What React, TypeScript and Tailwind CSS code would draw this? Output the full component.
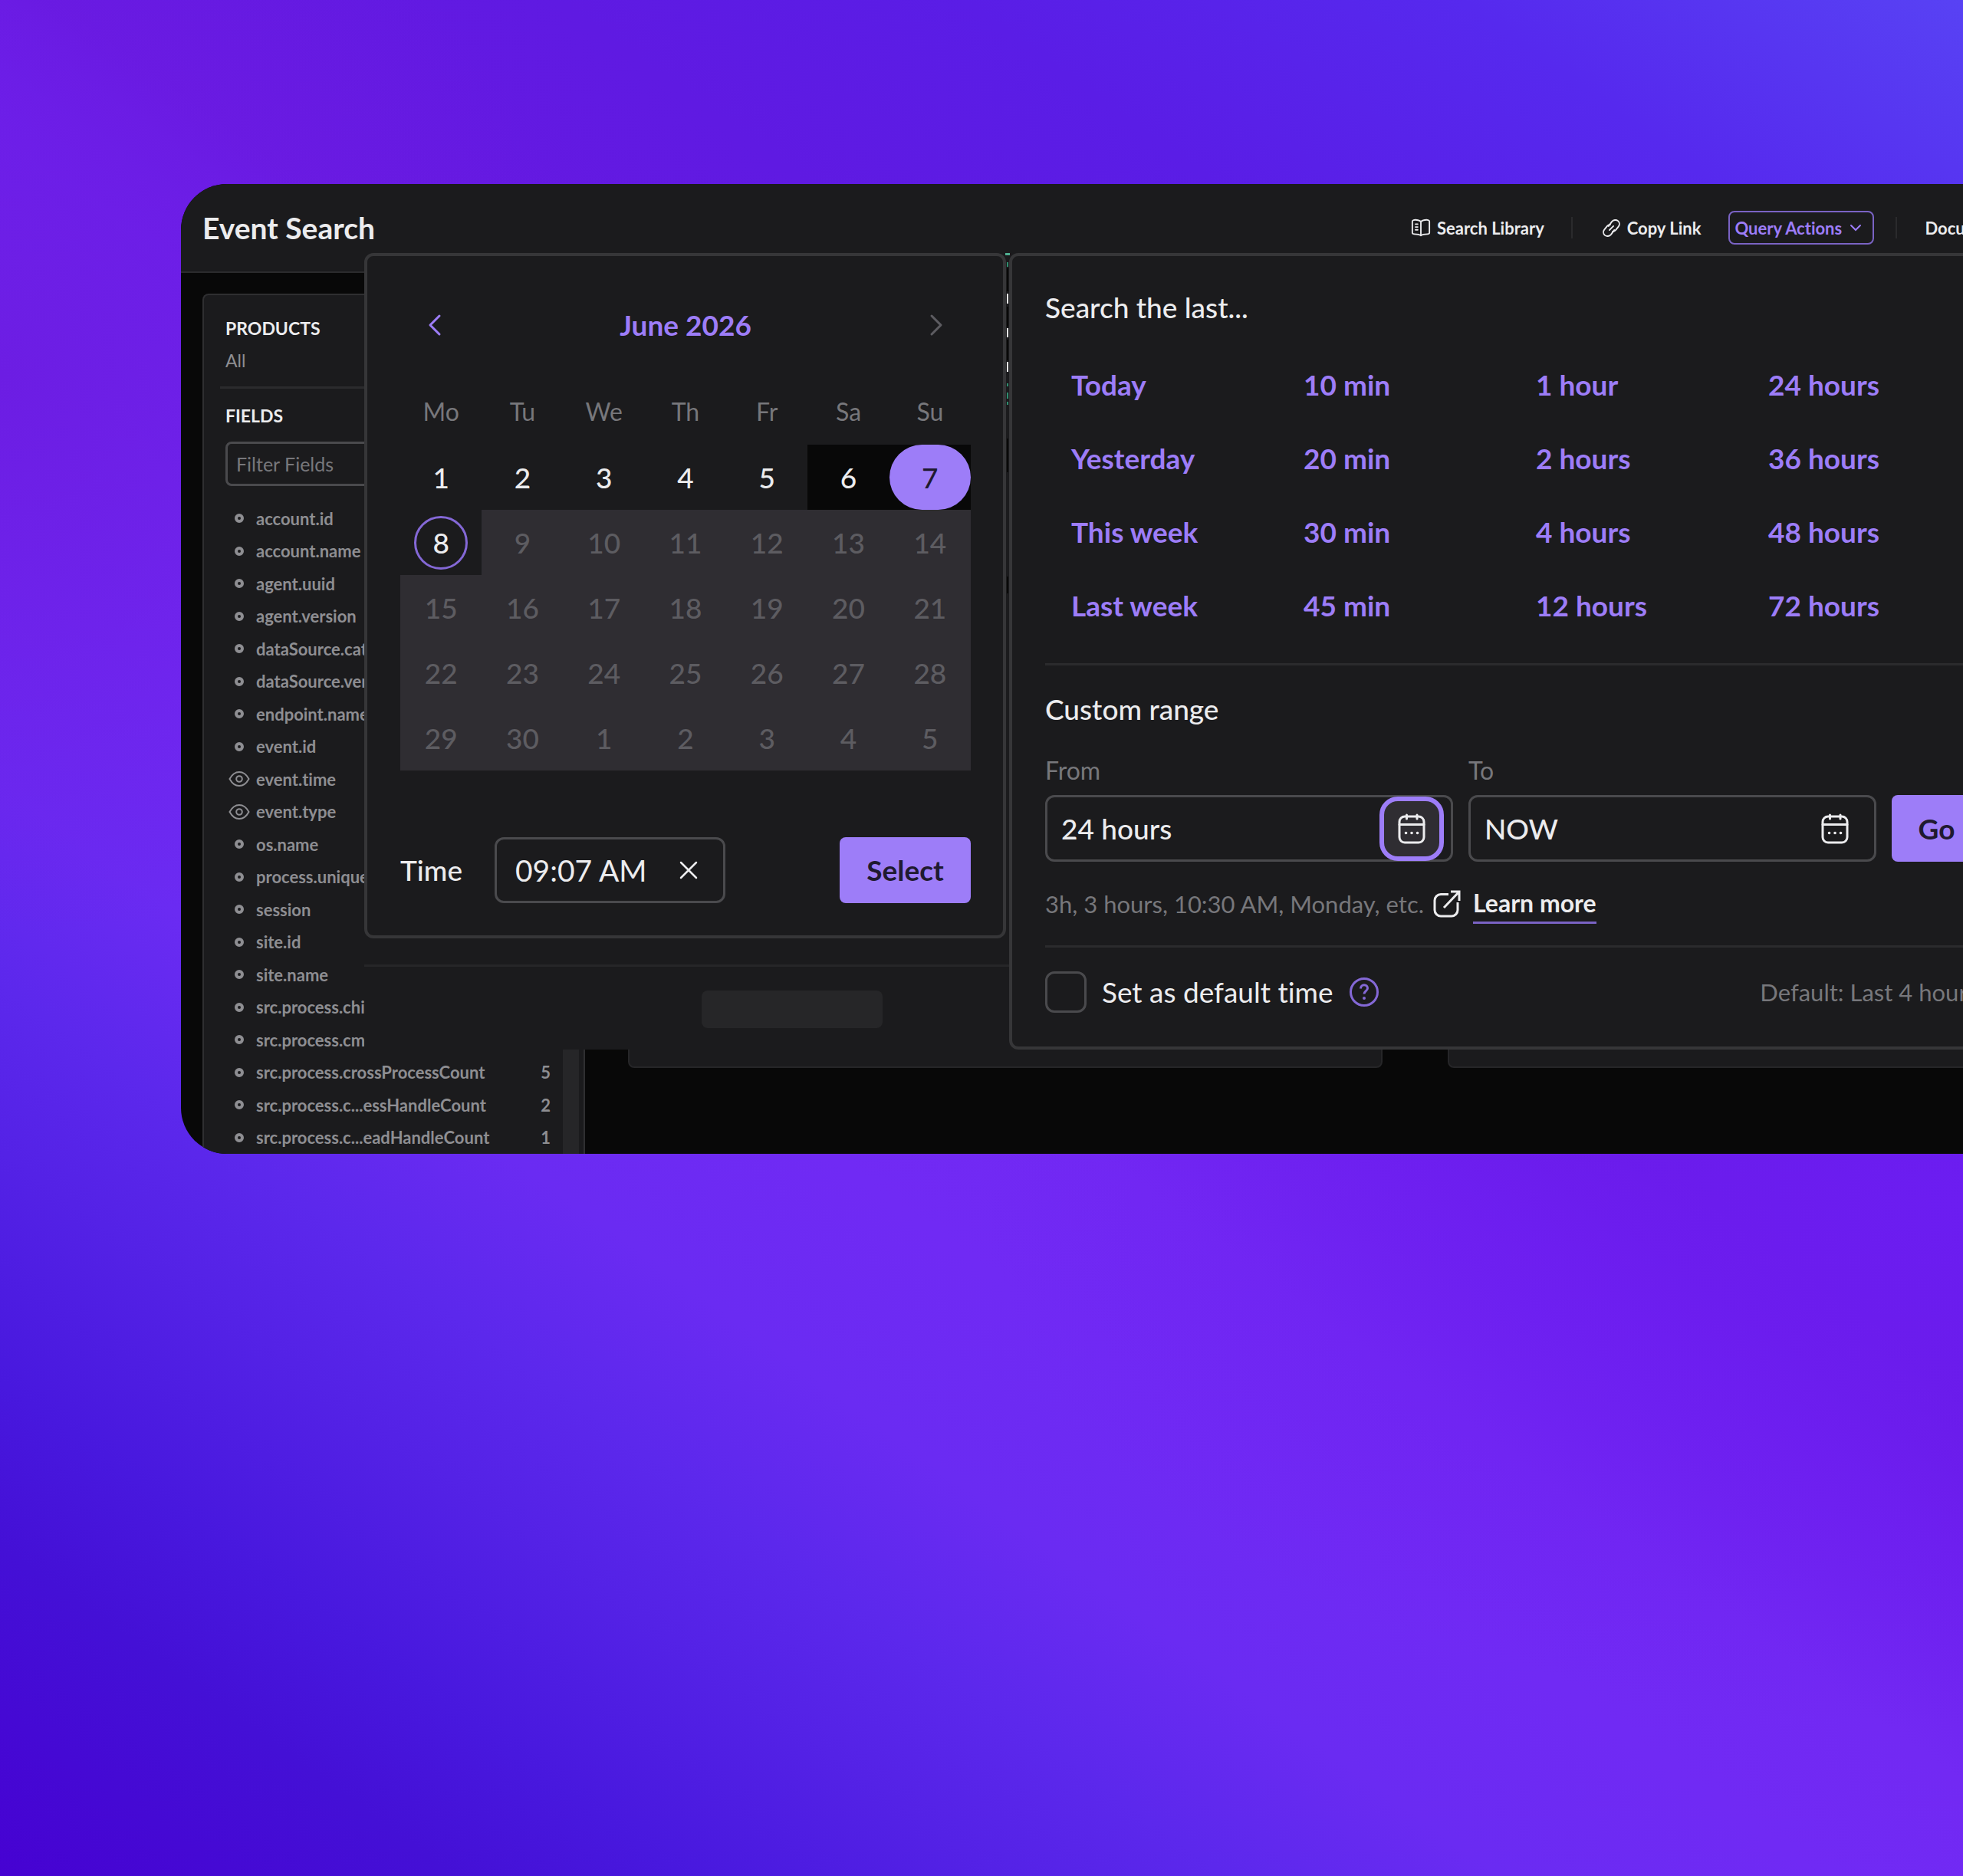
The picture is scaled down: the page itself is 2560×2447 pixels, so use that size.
import { useState } from "react";

type Field = {
  name: string;
  count: number;
  pinned?: boolean;
};

const fields: Field[] = [
  { name: "account.id", count: 1 },
  { name: "account.name", count: 1 },
  { name: "agent.uuid", count: 4 },
  { name: "agent.version", count: 2 },
  { name: "dataSource.category", count: 1 },
  { name: "dataSource.vendor", count: 1 },
  { name: "endpoint.name", count: 4 },
  { name: "event.id", count: 9 },
  { name: "event.time", count: 9, pinned: true },
  { name: "event.type", count: 9, pinned: true },
  { name: "os.name", count: 2 },
  { name: "process.unique.key", count: 9 },
  { name: "session", count: 1 },
  { name: "site.id", count: 1 },
  { name: "site.name", count: 1 },
  { name: "src.process.childProcCount", count: 9 },
  { name: "src.process.cmdline", count: 9 },
  { name: "src.process.crossProcessCount", count: 5 },
  { name: "src.process.c...essHandleCount", count: 2 },
  { name: "src.process.c...eadHandleCount", count: 1 },
];

const weekdays = ["Mo", "Tu", "We", "Th", "Fr", "Sa", "Su"];

const days = Array.from({ length: 35 }, (_, i) => (i < 30 ? i + 1 : i - 29));

const presets = [
  ["Today", "10 min", "1 hour", "24 hours"],
  ["Yesterday", "20 min", "2 hours", "36 hours"],
  ["This week", "30 min", "4 hours", "48 hours"],
  ["Last week", "45 min", "12 hours", "72 hours"],
];

const BookIcon = () => (
  <svg width="26" height="26" viewBox="0 0 28 26" fill="none" stroke="currentColor" strokeWidth="2" strokeLinejoin="round" strokeLinecap="round">
    <path d="M14 4.5C12 2.6 9 2 6 2 5.500 2 2 2.500 2 4v16c0 1.400 1.500 2 3 2 3.500 0 7 .3 9 2 2-1.700 5.500-2 9-2 1.500 0 3-.6 3-2V4c0-1.500-3.500-2-4-2-3 0-6 .6-8 2.500zM14 4.500V24" />
    <path d="M6.500 8h3M6.500 12h3M6.500 16h3" />
  </svg>
);

const LinkIcon = () => (
  <svg width="25" height="25" viewBox="0 0 24 24" fill="none" stroke="currentColor" strokeWidth="1.8" strokeLinecap="round" strokeLinejoin="round">
    <path d="M9.500 14.500l5-5" />
    <path d="M8.500 9.500l4-5.500c2-2.400 5.500-2.800 7.700-1 2.200 1.900 2.400 5 .6 7.200l-3.500 4.400c-1 1.200-2.400 1.800-3.800 1.600" />
    <path d="M15.500 14.500l-4 5.500c-2 2.400-5.500 2.800-7.700 1-2.200-1.900-2.400-5-.6-7.200l3.500-4.400c1-1.200 2.400-1.800 3.800-1.600" />
  </svg>
);

const EyeIcon = () => (
  <svg width="28" height="22" viewBox="0 0 28 22" fill="none" stroke="currentColor" strokeWidth="2">
    <path d="M1.500 11C5 4.500 9 2 14 2s9 2.500 12.500 9C23 17.500 19 20 14 20S5 17.500 1.500 11z" />
    <circle cx="14" cy="11" r="3.800" />
  </svg>
);

const DotIcon = () => (
  <svg width="28" height="22" viewBox="0 0 28 22" fill="none" stroke="currentColor" strokeWidth="4">
    <circle cx="14" cy="11" r="4" />
  </svg>
);

const CalendarIcon = () => (
  <svg width="36" height="40" viewBox="0 0 36 40" fill="none" stroke="currentColor" strokeWidth="3" strokeLinecap="round">
    <rect x="2" y="4" width="32" height="34" rx="7" />
    <path d="M2 14.500h32M11.500 2v5M25 2v5" />
    <path d="M10.500 25.500h.1M18 25.500h.1M25.500 25.500h.1" strokeWidth="3.600" />
  </svg>
);

const ExternalIcon = () => (
  <svg width="36" height="36" viewBox="0 0 36 36" fill="none" stroke="currentColor" strokeWidth="3">
    <path d="M20 5.500H10A8 8 0 0 0 2 13.500V26a8 8 0 0 0 8 8h14a8 8 0 0 0 8-8V16" />
    <path d="M14 23L34 2M23 2h11v12" />
  </svg>
);

const HelpIcon = () => (
  <svg width="40" height="40" viewBox="0 0 40 40" fill="none" stroke="currentColor" strokeWidth="3">
    <circle cx="20" cy="20" r="17.500" />
    <path d="M15.500 15.500c0-3 2-4.800 4.500-4.800s4.500 1.800 4.500 4.300c0 3.500-4.500 3.800-4.500 7.500" />
    <circle cx="20" cy="28" r="2" fill="currentColor" stroke="none" />
  </svg>
);

const CloseIcon = () => (
  <svg width="24" height="24" viewBox="0 0 24 24" fill="none" stroke="currentColor" strokeWidth="2.500" strokeLinecap="round">
    <path d="M2 2l20 20M22 2L2 22" />
  </svg>
);

const ArrowIcon = ({ flip }: { flip?: boolean }) => (
  <svg width="40" height="40" viewBox="0 0 40 40" fill="none" stroke="currentColor" strokeWidth="3" strokeLinecap="round" strokeLinejoin="round">
    <path d={flip ? "M14 8l12 12-12 12" : "M26 8L14 20l12 12"} />
  </svg>
);

const TopBar = () => {
  return (
    <header className="flex h-[116px] items-center border-b-2 border-[#2b2b2d] bg-[#1b1b1d] pl-7 font-bold text-[#ececee]">
      <h1 className="text-[39px]">Event Search</h1>
      <nav className="ml-auto flex w-[860px] items-center text-[22px]">
        <button className="flex items-center gap-2">
          <BookIcon />
          Search Library
        </button>
        <span className="ml-[35px] mr-[38px] h-7 w-[2px] bg-[#2b2b2d]" />
        <button className="flex items-center gap-2">
          <LinkIcon />
          Copy Link
        </button>
        <button className="ml-[36px] flex h-11 w-[190px] items-center justify-between rounded-lg border-2 border-[#7a63c4] px-[6px] text-[#9d7df8]">
          Query Actions
          <svg className="mr-2" width="16" height="10" viewBox="0 0 16 10" fill="none" stroke="currentColor" strokeWidth="2" strokeLinecap="round">
            <path d="M2 2l6 6 6-6" />
          </svg>
        </button>
        <span className="ml-[28px] mr-[36px] h-7 w-[2px] bg-[#2b2b2d]" />
        <a href="#docs">Documentation</a>
      </nav>
    </header>
  );
};

const Sidebar = () => {
  return (
    <aside className="w-[499px] shrink-0 rounded-t-lg border-2 border-b-0 border-[#2f2f31] bg-[#1b1b1d] pt-[22px] text-[23px]">
      <h2 className="px-7 font-bold leading-[42px] text-[#ececee]">PRODUCTS</h2>
      <p className="px-7 leading-[42px] text-[#8e8e92]">All</p>
      <hr className="mx-[21px] mt-[13px] border-t-3 border-[#2b2b2d]" />
      <h2 className="mt-[14px] px-7 font-bold leading-[42px] text-[#ececee]">FIELDS</h2>
      <div className="mt-[13px] px-7">
        <input
          aria-label="Filter Fields"
          placeholder="Filter Fields"
          className="h-[58px] w-full rounded-lg border-3 border-[#4a4a4d] px-[11px] text-[25px] placeholder:text-[#77777b]"
        />
      </div>
      <div className="mt-[21px] flex pr-1.5">
        <ul className="grid h-[850px] flex-1 auto-rows-fr pl-8 pr-4 text-[22px] font-bold text-[#8e8e92]">
          {fields.map((field) => (
            <li key={field.name} className="flex items-center gap-2">
              {field.pinned ? <EyeIcon /> : <DotIcon />}
              <span>{field.name}</span>
              <span className="ml-auto">{field.count}</span>
            </li>
          ))}
        </ul>
        <div className="w-[21px] bg-[#262628]" />
      </div>
    </aside>
  );
};

const Day: React.FC<any> = ({ index, day }) => {
  if (index > 7) {
    return (
      <button disabled className="h-[85px] bg-[#2f2d32] text-[#5d5c61]">
        {day}
      </button>
    );
  }
  if (index === 6) {
    return (
      <div className="h-[85px] bg-[#080808]">
        <button className="h-full w-full rounded-full bg-[#9d7df8] text-[#1f1a30]">{day}</button>
      </div>
    );
  }
  if (index === 7) {
    return (
      <div className="flex h-[85px] items-center justify-center">
        <button className="h-[70px] w-[70px] rounded-full border-3 border-[#8468d6]">{day}</button>
      </div>
    );
  }
  return <button className={index === 5 ? "h-[85px] bg-[#080808]" : "h-[85px]"}>{day}</button>;
};

const CalendarPopup = () => {
  const [time, setTime] = useState("09:07 AM");

  return (
    <section className="w-[837px] rounded-xl border-4 border-[#363638] bg-[#1b1b1d] pb-[42px] pl-[43px] pr-[42px] pt-12">
      <div className="flex h-[84px] items-center justify-between px-[25px] text-[#9d7df8]">
        <button aria-label="Previous month">
          <ArrowIcon />
        </button>
        <h2 className="text-[37px] font-bold">June 2026</h2>
        <button aria-label="Next month" className="text-[#5d5c61]">
          <ArrowIcon flip />
        </button>
      </div>
      <div className="mt-7 grid grid-cols-7 text-center text-[32px] leading-[86px] text-[#77777b]">
        {weekdays.map((day) => (
          <span key={day}>{day}</span>
        ))}
      </div>
      <div className="grid grid-cols-7 text-[37px] font-medium text-[#ececee]">
        {days.map((day, i) => (
          <Day key={i} index={i} day={day} />
        ))}
      </div>
      <div className="mt-[87px] flex h-[86px] items-stretch text-[37px] text-[#ececee]">
        <label htmlFor="time" className="flex w-[123px] items-center font-medium">
          Time
        </label>
        <div className="flex w-[301px] items-center justify-between rounded-xl border-3 border-[#4a4a4d] pl-6 pr-[33px]">
          <input id="time" value={time} onChange={(e) => setTime(e.target.value)} className="w-[190px] text-[39px]" />
          <button aria-label="Clear time" onClick={() => setTime("")}>
            <CloseIcon />
          </button>
        </div>
        <button className="ml-auto w-[171px] rounded-lg bg-[#9d7df8] font-bold text-[#1f1a30]">Select</button>
      </div>
    </section>
  );
};

const RangeInput: React.FC<any> = ({ id, label, initial, active }) => {
  const [value, setValue] = useState(initial);

  return (
    <div className="w-[532px] shrink-0">
      <label htmlFor={id} className="block text-[32px] leading-[40px] text-[#77777b]">
        {label}
      </label>
      <div className="mt-3 flex h-[87px] items-center justify-between rounded-xl border-3 border-[#4a4a4d] pl-[18px] pr-[9px]">
        <input id={id} value={value} onChange={(e) => setValue(e.target.value)} className="w-[400px] text-[37px] font-medium" />
        <button
          aria-label={`Pick ${label} date`}
          className={
            active
              ? "flex h-[84px] w-[84px] shrink-0 items-center justify-center rounded-3xl border-6 border-[#9d7df8] bg-[#2f2d32]"
              : "flex h-[84px] w-[84px] shrink-0 items-center justify-center"
          }
        >
          <CalendarIcon />
        </button>
      </div>
    </div>
  );
};

const RangePanel = () => {
  return (
    <section className="w-[1310px] shrink-0 rounded-xl border-4 border-[#363638] bg-[#1b1b1d] px-[43px] pb-11 pt-[45px] text-[#ececee]">
      <h2 className="text-[37px] font-medium leading-[44px]">Search the last...</h2>
      <div className="mt-[31px] grid grid-cols-[repeat(4,303px)] pl-[34px] text-[37px] font-bold leading-[96px] text-[#9d7df8]">
        {presets.flat().map((preset) => (
          <button key={preset} className="text-left">
            {preset}
          </button>
        ))}
      </div>
      <hr className="mt-[27px] border-t-3 border-[#2b2b2d]" />
      <h2 className="mt-[35px] text-[37px] font-medium leading-[44px]">Custom range</h2>
      <div className="mt-[38px] flex items-end gap-5">
        <RangeInput id="from" label="From" initial="24 hours" active />
        <RangeInput id="to" label="To" initial="NOW" />
        <button className="h-[87px] w-[117px] shrink-0 rounded-lg bg-[#9d7df8] text-[37px] font-bold text-[#1f1a30]">Go</button>
      </div>
      <div className="mt-[33px] flex h-[44px] items-center text-[32px] text-[#77777b]">
        <p className="text-[31px]">3h, 3 hours, 10:30 AM, Monday, etc.</p>
        <a href="#learn" className="ml-3 flex items-center gap-4 font-bold text-[#ececee]">
          <ExternalIcon />
          <span className="border-b-3 border-[#7a63c4]">Learn more</span>
        </a>
      </div>
      <hr className="mt-8 border-t-3 border-[#2b2b2d]" />
      <div className="mt-[31px] flex h-[54px] items-center">
        <input id="default-time" type="checkbox" className="h-[54px] w-[54px] appearance-none rounded-xl border-3 border-[#4a4a4d]" />
        <label htmlFor="default-time" className="ml-5 text-[37px]">
          Set as default time
        </label>
        <button aria-label="Help" className="ml-5 text-[#8468d6]">
          <HelpIcon />
        </button>
        <p className="ml-auto text-[31px] text-[#77777b]">Default: Last 4 hours</p>
      </div>
    </section>
  );
};

// thin slice of the histogram that stays visible between the two popups
const ChartSliver = () => (
  <svg className="absolute left-[836px] top-0 h-[900px] w-[6px]" viewBox="0 0 6 900">
    <path d="M0 1.500h6" stroke="#4fae90" strokeWidth="3" />
    <path d="M3 12v6M3 170v4M3 182v8M3 194v4" stroke="#2f8f70" strokeWidth="2" />
    <path d="M3 53v13M3 98v12M3 142v13" stroke="#ececee" strokeWidth="2" />
    <path d="M3 20v30M3 70v26M3 113v27M3 242v44M3 422v22" stroke="#080808" strokeWidth="2" />
  </svg>
);

export default function App() {
  return (
    <div
      className="min-h-screen overflow-hidden bg-[#5f26ee] pl-[236px] pt-[240px] font-['Lato',sans-serif] [font-variant-ligatures:none]"
      style={{
        backgroundImage: [
          "radial-gradient(50% 28% at 100% 64%, #6c1df1 0%, #6c1df100 100%)",
          "radial-gradient(30% 30% at 0% 20%, #6c1de3 0%, #6c1de300 100%)",
          "linear-gradient(36deg, #4602d2 0%, #4410d6 10%, #4818de 15%, #5422e6 22%, #5c28ec 27%, #6a2bf2 33%, #702af4 40%, #7229f3 46%, #6e20ee 53%, #6819e1 58%, #5f1ae2 69%, #5a1de6 78%, #5629ee 89%, #5842f4 100%)",
        ].join(", "),
      }}
    >
      <main className="relative -mr-[140px] overflow-hidden rounded-l-[60px] bg-[#080808]">
        <TopBar />
        <div className="flex pl-7 pt-[27px]">
          <Sidebar />
          <div className="flex flex-1 gap-[85px] overflow-hidden pl-[56px]">
            <div className="h-[1010px] w-[984px] shrink-0 rounded-lg border-2 border-[#262628] bg-[#1b1b1d]" />
            <div className="h-[1010px] w-[984px] shrink-0 rounded-lg border-2 border-[#262628] bg-[#1b1b1d]" />
          </div>
        </div>
        <div className="absolute left-[239px] top-[90px] flex">
          <div className="w-[841px] bg-[#1b1b1d]">
            <CalendarPopup />
            <hr className="mt-[34px] border-t-3 border-[#262628]" />
            <div className="ml-[440px] mt-[31px] h-[49px] w-[236px] rounded-lg bg-[#262628]" />
          </div>
          <RangePanel />
          <ChartSliver />
        </div>
      </main>
    </div>
  );
}
